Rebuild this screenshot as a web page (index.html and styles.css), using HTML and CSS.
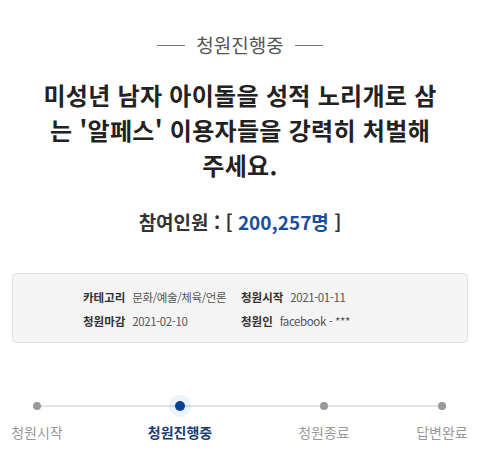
FILE: index.html
```html
<!DOCTYPE html>
<html lang="ko">
<head>
  <meta charset="UTF-8" />
  <meta name="viewport" content="width=device-width, initial-scale=1.0"/>
  <title>청원진행중</title>
  <link rel="stylesheet" href="styles.css">
</head>
<body>
  <div class="petition">
    <div class="status"><span>청원진행중</span></div>

    <h3 class="title">미성년 남자 아이돌을 성적 노리개로 삼<br>는 '알페스' 이용자들을 강력히 처벌해<br>주세요.</h3>

    <div class="count">참여인원 : [ <span class="count_num">200,257명</span> ]</div>

    <div class="info">
      <div class="info_item"><strong>카테고리</strong><span>문화/예술/체육/언론</span></div>
      <div class="info_item"><strong>청원시작</strong><span>2021-01-11</span></div>
      <div class="info_item"><strong>청원마감</strong><span>2021-02-10</span></div>
      <div class="info_item"><strong>청원인</strong><span>facebook - ***</span></div>
    </div>

    <div class="steps">
      <div class="step"><i class="dot"></i><span class="step_label">청원시작</span></div>
      <div class="step active"><i class="dot"></i><span class="step_label">청원진행중</span></div>
      <div class="step"><i class="dot"></i><span class="step_label">청원종료</span></div>
      <div class="step"><i class="dot"></i><span class="step_label">답변완료</span></div>
    </div>
  </div>
</body>
</html>
```

FILE: styles.css
```css
body {
  margin: 0;
  font-family: "Noto Sans CJK KR", "Noto Sans", sans-serif;
  background: #fff;
  color: #333;
}
.petition {
  width: 480px;
  padding-top: 33px;
}
.status {
  display: flex;
  justify-content: center;
  align-items: center;
  gap: 11px;
  font-size: 19px;
  line-height: 24px;
  color: #555;
}
.status::before,
.status::after {
  content: "";
  width: 28px;
  height: 1px;
  background: #777;
}
.title {
  margin: 20px 0 0;
  text-align: center;
  font-size: 24px;
  line-height: 35px;
  font-weight: bold;
  color: #222;
  letter-spacing: 0.3px;
}
.count {
  margin-top: 26px;
  text-align: center;
  font-size: 19px;
  line-height: 28px;
  font-weight: bold;
  color: #333;
}
.count_num {
  color: #1a4d9c;
}
.info {
  margin: 37px 12px 0;
  padding: 11px 0 9px 70px;
  background: #f4f4f4;
  border: 1px solid #e2e2e2;
  border-radius: 4px;
  display: grid;
  grid-template-columns: 158px auto;
  font-size: 11.5px;
  line-height: 24px;
  color: #555;
}
.info_item span {
  letter-spacing: -0.4px;
}
.info_item strong {
  color: #333;
  margin-right: 7px;
}
.steps {
  position: relative;
  margin-top: 58px;
  padding-left: 37px;
  display: grid;
  grid-template-columns: 143px 144px 118px auto;
}
.steps::before {
  content: "";
  position: absolute;
  left: 37px;
  right: 38px;
  top: 4px;
  height: 2px;
  background: #e3e3e3;
}
.step {
  position: relative;
  display: flex;
  flex-direction: column;
}
.dot {
  width: 8px;
  height: 8px;
  margin-left: -4px;
  margin-top: 1px;
  border-radius: 50%;
  background: #999;
}
.step_label {
  width: 90px;
  margin-left: -45px;
  margin-top: 12px;
  text-align: center;
  font-size: 14px;
  color: #999;
}
.step.active .dot {
  width: 10px;
  height: 10px;
  margin-left: -5px;
  margin-top: 0;
  background: #0b3f94;
  box-shadow: 0 0 0 6px rgba(60, 140, 240, 0.1);
}
.step.active .step_label {
  margin-top: 11px;
  font-weight: bold;
  color: #1c3b6f;
}
```
